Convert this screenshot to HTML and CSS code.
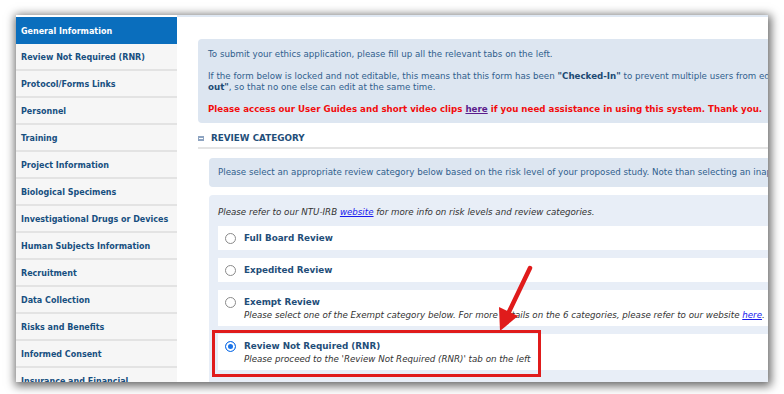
FILE: index.html
```html
<!DOCTYPE html>
<html lang="en">
<head>
    <meta charset="UTF-8">
    <title>NTU-IRB Application - General Information</title>
    <link rel="stylesheet" href="styles.css">
</head>
<body>
    <div class="shot">
        <!-- Tabs on the left -->
        <aside class="sidebar">
            <a class="nav-item active">General Information</a>
            <a class="nav-item">Review Not Required (RNR)</a>
            <a class="nav-item">Protocol/Forms Links</a>
            <a class="nav-item">Personnel</a>
            <a class="nav-item">Training</a>
            <a class="nav-item">Project Information</a>
            <a class="nav-item">Biological Specimens</a>
            <a class="nav-item">Investigational Drugs or Devices</a>
            <a class="nav-item">Human Subjects Information</a>
            <a class="nav-item">Recruitment</a>
            <a class="nav-item">Data Collection</a>
            <a class="nav-item">Risks and Benefits</a>
            <a class="nav-item">Informed Consent</a>
            <a class="nav-item">Insurance and Financial</a>
        </aside>

        <main class="content">
            <div class="notice">
                <p>To submit your ethics application, please fill up all the relevant tabs on the left.</p>
                <p><span class="nowrap">If the form below is locked and not editable, this means that this form has been <b>"Checked-In"</b> to prevent multiple users from editing it. Please make sure it is <b>"Checked-</b></span><br><b>out"</b>, so that no one else can edit at the same time.</p>
                <p class="alert">Please access our User Guides and short video clips <a href="#">here</a> if you need assistance in using this system. Thank you.</p>
            </div>

            <h2 class="section-title"><span class="toggle"></span>Review Category</h2>

            <div class="hint">Please select an appropriate review category below based on the risk level of your proposed study. Note than selecting an inappropriate category may delay your application.</div>

            <div class="options">
                <p class="refer">Please refer to our NTU-IRB <a href="#">website</a> for more info on risk levels and review categories.</p>

                <div class="option">
                    <span class="radio"></span>
                    <div class="option-text">
                        <div class="option-title">Full Board Review</div>
                    </div>
                </div>
                <div class="option">
                    <span class="radio"></span>
                    <div class="option-text">
                        <div class="option-title">Expedited Review</div>
                    </div>
                </div>
                <div class="option">
                    <span class="radio"></span>
                    <div class="option-text">
                        <div class="option-title">Exempt Review</div>
                        <div class="option-note">Please select one of the Exempt category below. For more details on the 6 categories, please refer to our website <a href="#">here</a>.</div>
                    </div>
                </div>
                <div class="option">
                    <span class="radio checked"></span>
                    <div class="option-text">
                        <div class="option-title">Review Not Required (RNR)</div>
                        <div class="option-note">Please proceed to the 'Review Not Required (RNR)' tab on the left</div>
                    </div>
                </div>
            </div>
        </main>

        <!-- Annotation drawn over the screenshot -->
        <svg class="annotation" viewBox="16 15 752 367" width="752" height="367">
            <rect x="213.5" y="331.5" width="326" height="44" fill="none" stroke="#e01b1b" stroke-width="3"/>
            <line x1="530" y1="268" x2="507" y2="316" stroke="#e01b1b" stroke-width="4.5" stroke-linecap="round"/>
            <polygon points="500,331 518,316 499,307" fill="#e01b1b"/>
        </svg>
    </div>
</body>
</html>
```

FILE: styles.css
```css
body {
    margin: 0;
    padding: 15px 16px;
    background-color: white;
    font-family: "DejaVu Sans", Verdana, sans-serif;
}

.shot {
    position: relative;
    width: 752px;
    height: 367px;
    display: flex;
    overflow: hidden;
    background-color: white;
    box-shadow: 1px 2px 9px 2px rgba(0, 0, 0, 0.6);
}

/* Tabs */
.sidebar {
    width: 161px;
    flex: none;
    margin-top: 2px;
    background-color: #f6f6f6;
    display: flex;
    flex-direction: column;
}

.nav-item {
    height: 24px;
    flex: none;
    display: flex;
    align-items: center;
    padding: 1px 0 0 5px;
    border-bottom: 2px solid #e3e3e3;
    color: #174f80;
    font-size: 8px;
    font-weight: bold;
    white-space: nowrap;
}

.nav-item.active {
    height: 26px;
    border-bottom: none;
    background-color: #0a6ebd;
    color: white;
}

/* Main form */
.content {
    flex: 1;
    min-width: 0;
    border-top: 2px solid #dfe8f3;
    padding: 22px 0 0 21px;
    color: #30608d;
    font-size: 8.7px;
}

.notice {
    background-color: #dde6f1;
    border-radius: 4px 0 0 4px;
    padding: 10px 0 8px 10px;
    line-height: 11px;
}

.notice p {
    margin: 0 0 11px 0;
}

.notice p:last-child {
    margin-bottom: 0;
}

.notice b {
    color: #1c4a74;
}

.nowrap {
    white-space: nowrap;
}

.alert {
    color: #f20d0d;
    font-weight: bold;
}

.alert a {
    color: #5a1c8c;
}

.section-title {
    margin: 9px 0 0 0;
    padding-bottom: 3px;
    border-bottom: 2px solid #e4e4e4;
    display: flex;
    align-items: center;
    gap: 7px;
    color: #1f4e79;
    font-size: 8.8px;
    font-weight: bold;
    line-height: 12px;
    text-transform: uppercase;
}

.toggle {
    width: 6px;
    height: 5px;
    background-color: #8ea4c1;
    position: relative;
}

.toggle::after {
    content: "";
    position: absolute;
    left: 1px;
    right: 1px;
    top: 2px;
    height: 1px;
    background-color: white;
}

.hint {
    margin: 9px 0 0 11px;
    background-color: #dde6f1;
    border-radius: 4px 0 0 4px;
    padding: 9px 0 9px 9px;
    line-height: 11px;
    white-space: nowrap;
}

.options {
    margin: 8px 0 0 11px;
    background-color: #e8eef7;
    border-radius: 4px 0 0 0;
    padding: 12px 0 12px 9px;
    display: flex;
    flex-direction: column;
    gap: 8px;
}

.refer {
    margin: 0;
    color: #333;
    font-style: italic;
    line-height: 11px;
}

.refer a,
.option-note a {
    color: #1a1aee;
}

.option {
    background-color: white;
    padding: 5px 0 5px 7px;
    display: flex;
    align-items: flex-start;
    gap: 8px;
}

.radio {
    width: 9px;
    height: 9px;
    margin-top: 1.5px;
    border: 1px solid #8a8a8a;
    border-radius: 50%;
    flex: none;
}

.radio.checked {
    border-color: #1a73e8;
    background-color: #1a73e8;
    box-shadow: inset 0 0 0 2px white;
}

.option-title {
    color: #1f4e79;
    font-size: 8.8px;
    font-weight: bold;
    line-height: 14px;
}

.option-note {
    color: #333;
    font-style: italic;
    line-height: 12px;
}

.annotation {
    position: absolute;
    left: 0;
    top: 0;
    pointer-events: none;
}
```
